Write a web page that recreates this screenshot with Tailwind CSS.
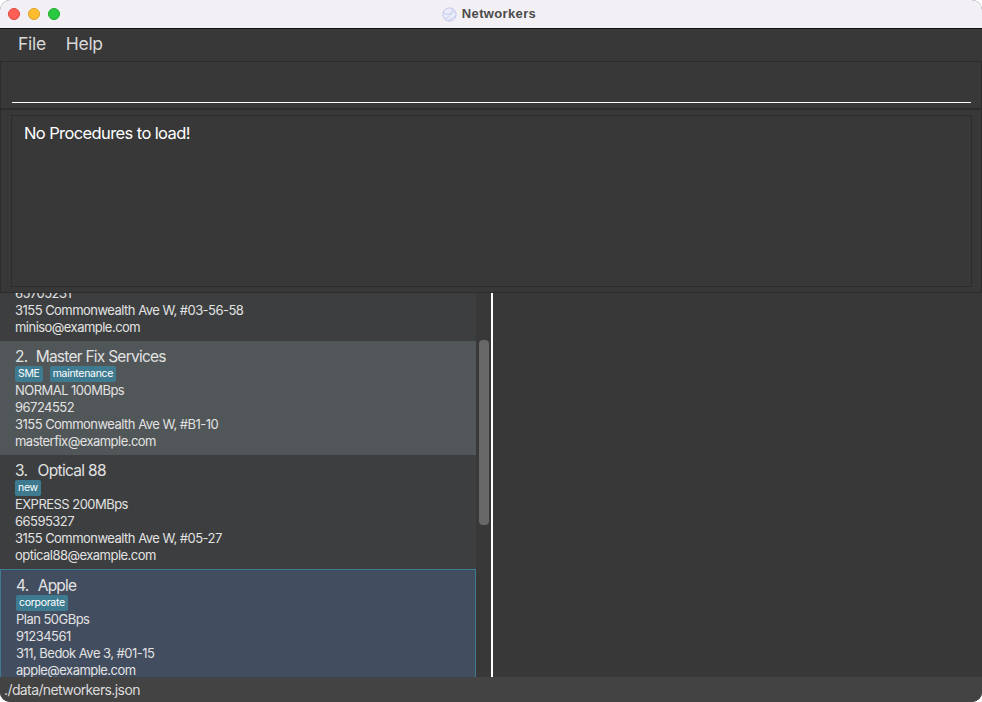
<!DOCTYPE html>
<html lang="en">
<head>
  <meta charset="UTF-8"/>
  <title>Networkers</title>
  <script src="https://cdn.jsdelivr.net/npm/@tailwindcss/browser@4"></script>
</head>
<body class="bg-white font-['Inter',sans-serif] overflow-hidden">
  <div class="w-[982px] h-[702px] flex flex-col rounded-[10px] overflow-hidden bg-[#383838]">

    <!-- Title bar -->
    <div class="h-[29px] shrink-0 relative flex items-center justify-center pr-1 bg-[#f2f0f4] border-b border-[#111]">
      <div class="absolute left-2 top-2 flex gap-2">
        <span class="w-3 h-3 rounded-full bg-[#ff5f57] border border-[#e0443e]"></span>
        <span class="w-3 h-3 rounded-full bg-[#febc2e] border border-[#dea123]"></span>
        <span class="w-3 h-3 rounded-full bg-[#28c840] border border-[#1aab29]"></span>
      </div>
      <div class="flex items-center gap-[5px]">
        <svg width="15" height="15" viewBox="0 0 15 15" fill="none">
          <circle cx="7.5" cy="7.5" r="6.6" fill="#ecebf8" stroke="#c9c4ee"/>
          <path d="M1.5 6 Q7 9.5 13.5 4 M3 12 Q8.5 10 11 1.5 M6 14 Q10.5 11 14 9" stroke="#b5c8ec" stroke-width="0.8"/>
        </svg>
        <span class="font-['Liberation_Sans',sans-serif] text-[13px] font-bold tracking-[0.35px] text-[#4a4a4a]">Networkers</span>
      </div>
    </div>

    <!-- Menu -->
    <div class="h-[33px] shrink-0 flex items-center gap-5 pl-[18px] pb-[2px] text-[17.5px] tracking-[-0.3px] text-[#d8d8d8] border-b border-[#2c2c2c]">
      <span>File</span>
      <span>Help</span>
    </div>

    <!-- Command box -->
    <div class="h-12 shrink-0 pl-[11px] pr-[10px] pb-[5px] flex flex-col justify-end border-x border-b-2 border-[#2c2c2c]">
      <div class="h-[1.5px] bg-white"></div>
    </div>

    <!-- Result display -->
    <div class="h-[183px] shrink-0 pt-[5px] pl-[10px] pr-[9px] border-x border-b border-[#2c2c2c]">
      <div class="h-[172px] border border-[#2c2c2c] px-3 py-[5px] text-[16.5px] tracking-[-0.6px] text-white">No Procedures to load!</div>
    </div>

    <!-- List and detail -->
    <div class="flex-1 min-h-0 flex">
      <div class="w-[476px] shrink-0 overflow-hidden bg-[#3c3e3f] text-[13px] tracking-[-0.53px] leading-[17px] text-[#e2e2e2]">

        <!-- first card, scrolled mostly out of view -->
        <div class="h-12 pl-[15px] pb-[5px] flex flex-col justify-end overflow-hidden">
          <p class="shrink-0">65705231</p>
          <p class="shrink-0">3155 Commonwealth Ave W, #03-56-58</p>
          <p class="shrink-0">miniso@example.com</p>
        </div>

        <div class="h-[114px] pl-[15px] pt-1.5 bg-[#515658]">
          <p class="text-[15.5px] tracking-[-0.75px] leading-[19px]"><span class="mr-px">2.</span>&nbsp; Master Fix Services</p>
          <div class="flex gap-[7px] h-4">
            <span class="px-[3px] rounded-[2px] bg-[#3e7b91] text-[10.5px] tracking-[-0.3px] leading-4 text-white">SME</span>
            <span class="px-[3px] rounded-[2px] bg-[#3e7b91] text-[10.5px] tracking-[-0.3px] leading-4 text-white">maintenance</span>
          </div>
          <p>NORMAL 100MBps</p>
          <p>96724552</p>
          <p>3155 Commonwealth Ave W, #B1-10</p>
          <p>masterfix@example.com</p>
        </div>

        <div class="h-[114px] pl-[15px] pt-1.5">
          <p class="text-[15.5px] tracking-[-0.7px] leading-[19px]"><span class="mr-[3px]">3.</span>&nbsp; Optical 88</p>
          <div class="flex gap-[7px] h-4">
            <span class="px-[3px] rounded-[2px] bg-[#3e7b91] text-[10.5px] tracking-[-0.3px] leading-4 text-white">new</span>
          </div>
          <p>EXPRESS 200MBps</p>
          <p>66595327</p>
          <p>3155 Commonwealth Ave W, #05-27</p>
          <p>optical88@example.com</p>
        </div>

        <div class="h-[114px] pl-[15px] pt-1.5 bg-[#424d5f] border border-[#3e7b91]">
          <p class="text-[15.5px] tracking-[-0.75px] leading-[19px]"><span class="mr-[2px]">4.</span>&nbsp; Apple</p>
          <div class="flex gap-[7px] h-4">
            <span class="px-[3px] rounded-[2px] bg-[#3e7b91] text-[10.5px] tracking-[-0.3px] leading-4 text-white">corporate</span>
          </div>
          <p>Plan 50GBps</p>
          <p>91234561</p>
          <p>311, Bedok Ave 3, #01-15</p>
          <p>apple@example.com</p>
        </div>

      </div>

      <!-- Scrollbar -->
      <div class="w-[15px] shrink-0 pt-[47px] pl-[3px]">
        <div class="w-[10px] h-[185px] rounded-[4px] bg-[#686868]"></div>
      </div>
      <div class="w-0.5 shrink-0 bg-white"></div>
      <div class="flex-1"></div>
    </div>

    <!-- Status bar -->
    <div class="h-[25px] shrink-0 pl-1 flex items-center text-[14px] tracking-[-0.6px] text-[#dcdcdc] bg-[#434343]">./data/networkers.json</div>
  </div>
</body>
</html>
